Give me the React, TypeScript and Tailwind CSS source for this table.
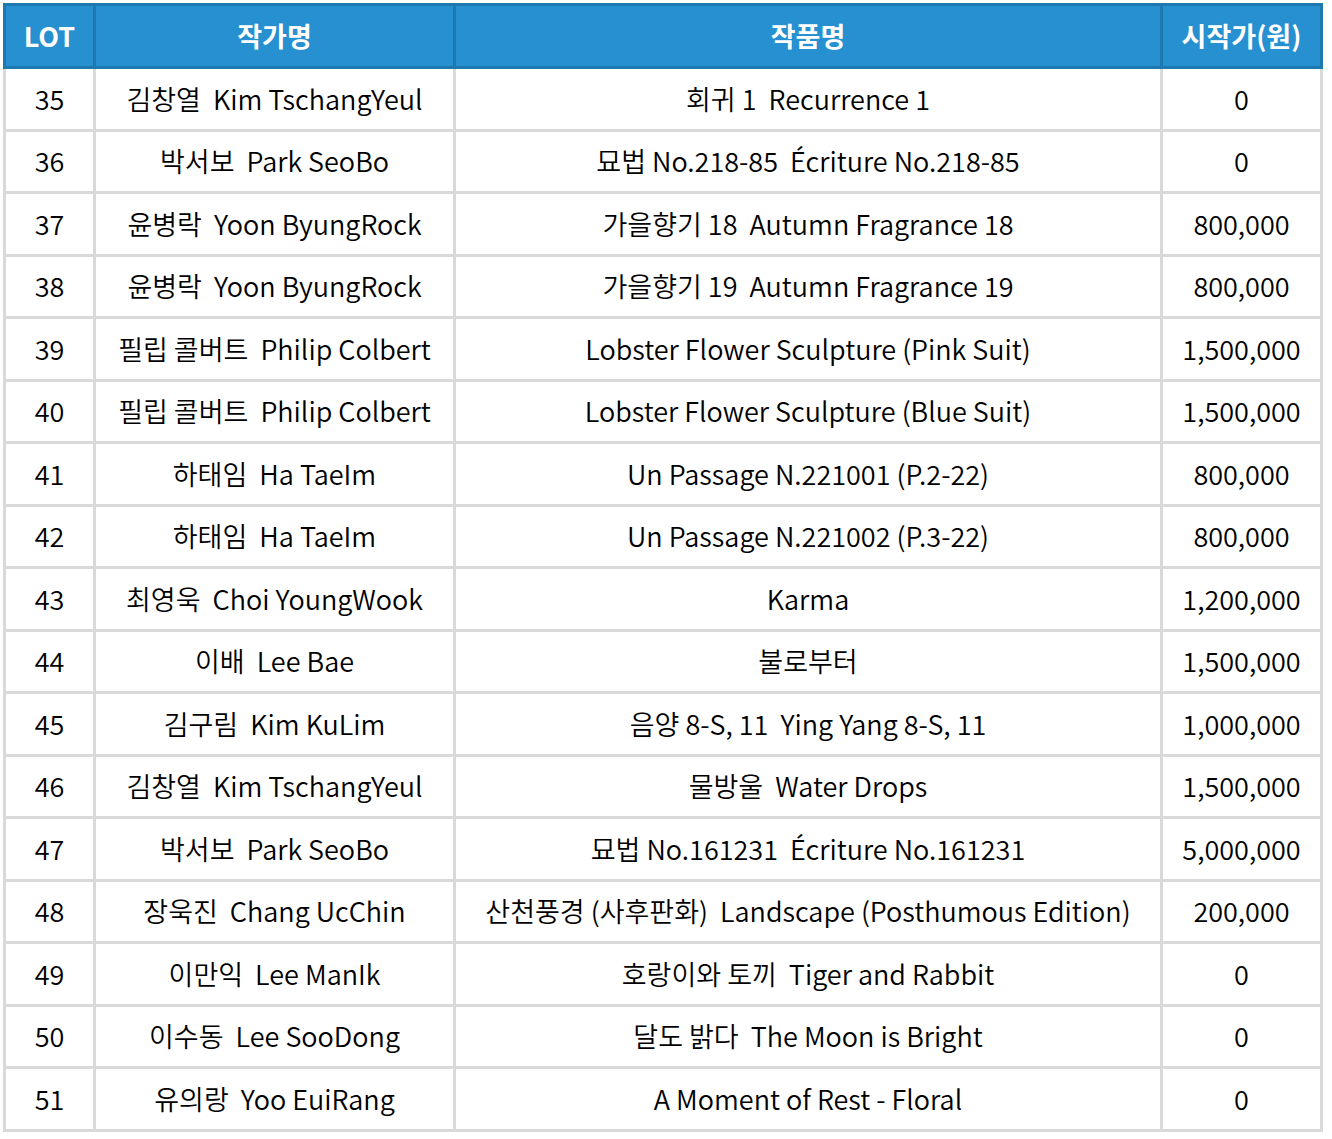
import React from "react";

const rows: [string, string, string, string][] = [
  ["35", "김창열  Kim TschangYeul", "회귀 1  Recurrence 1", "0"],
  ["36", "박서보  Park SeoBo", "묘법 No.218-85  Écriture No.218-85", "0"],
  ["37", "윤병락  Yoon ByungRock", "가을향기 18  Autumn Fragrance 18", "800,000"],
  ["38", "윤병락  Yoon ByungRock", "가을향기 19  Autumn Fragrance 19", "800,000"],
  ["39", "필립 콜버트  Philip Colbert", "Lobster Flower Sculpture (Pink Suit)", "1,500,000"],
  ["40", "필립 콜버트  Philip Colbert", "Lobster Flower Sculpture (Blue Suit)", "1,500,000"],
  ["41", "하태임  Ha TaeIm", "Un Passage N.221001 (P.2-22)", "800,000"],
  ["42", "하태임  Ha TaeIm", "Un Passage N.221002 (P.3-22)", "800,000"],
  ["43", "최영욱  Choi YoungWook", "Karma", "1,200,000"],
  ["44", "이배  Lee Bae", "불로부터", "1,500,000"],
  ["45", "김구림  Kim KuLim", "음양 8-S, 11  Ying Yang 8-S, 11", "1,000,000"],
  ["46", "김창열  Kim TschangYeul", "물방울  Water Drops", "1,500,000"],
  ["47", "박서보  Park SeoBo", "묘법 No.161231  Écriture No.161231", "5,000,000"],
  ["48", "장욱진  Chang UcChin", "산천풍경 (사후판화)  Landscape (Posthumous Edition)", "200,000"],
  ["49", "이만익  Lee ManIk", "호랑이와 토끼  Tiger and Rabbit", "0"],
  ["50", "이수동  Lee SooDong", "달도 밝다  The Moon is Bright", "0"],
  ["51", "유의랑  Yoo EuiRang", "A Moment of Rest - Floral", "0"],
];

const font = { fontFamily: '"Noto Sans CJK KR", "Noto Sans", sans-serif' };

export default function App() {
  return (
    <div className="bg-white min-h-[1139px] p-[3px]" style={font}>
      <div className="w-[1320px]">
        <div className="grid grid-cols-[87px_357px_704px_157px] gap-[3px] bg-[#1f78b0] p-[3px]">
          {["LOT", "작가명", "작품명", "시작가(원)"].map((h) => (
            <div
              key={h}
              className="h-[60px] bg-[#2690d0] flex items-center justify-center text-white font-bold text-[27px] whitespace-pre"
            >
              {h}
            </div>
          ))}
        </div>
        <div className="grid grid-cols-[87px_357px_704px_157px] gap-[3px] bg-[#d9d9d9] px-[3px] pb-[3px]">
          {rows.map((r) =>
            r.map((c, i) => (
              <div
                key={r[0] + "-" + i}
                className="h-[59.5px] bg-white flex items-center justify-center text-black text-[27px] font-[350] whitespace-pre"
              >
                {c}
              </div>
            ))
          )}
        </div>
      </div>
    </div>
  );
}
